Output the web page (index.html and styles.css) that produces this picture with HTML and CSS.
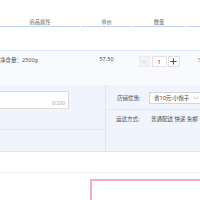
FILE: index.html
```html
<!DOCTYPE html>
<html lang="zh">
<head>
<meta charset="utf-8">
<link rel="stylesheet" href="styles.css">
</head>
<body>
<div class="page">
  <div class="grid thead">
    <div class="th">商品属性</div>
    <div class="th">单价</div>
    <div class="th">数量</div>
    <div class="th"></div>
  </div>
  <div class="spacer-top"></div>
  <div class="grid item">
    <div class="attr">净含量：2500g</div>
    <div class="price">57.50</div>
    <div class="qty">
      <span class="qbtn minus"><svg viewBox="0 0 10 10" width="6" height="6"><line x1="1" y1="5" x2="9" y2="5" stroke="#c8c8c8" stroke-width="1.2"/></svg></span>
      <span class="qinput">1</span>
      <span class="qbtn plus"><svg viewBox="0 0 10 10" width="7" height="7"><line x1="0.5" y1="5" x2="9.5" y2="5" stroke="#444" stroke-width="1.3"/><line x1="5" y1="0.5" x2="5" y2="9.5" stroke="#444" stroke-width="1.3"/></svg></span>
    </div>
    <div class="sum">57.50</div>
  </div>
  <div class="extra">
    <div class="left">
      <div class="msgrow">
        <div class="msgbox"><span class="count">0/200</span></div>
      </div>
      <div class="row2"></div>
    </div>
    <div class="right">
      <div class="shoprow">
        <span class="label">店铺优惠:</span>
        <div class="select">
          <span>省10元:小饱子</span>
          <svg class="chev" viewBox="0 0 10 6" width="6" height="4"><polyline points="0.5,0.5 5,5 9.5,0.5" fill="none" stroke="#999" stroke-width="1"/></svg>
        </div>
      </div>
      <div class="shiprow">
        <span class="label">运送方式:</span>
        <span class="ship">普通配送 快递 免邮</span>
      </div>
    </div>
  </div>
  <div class="spacer-mid"></div>
  <div class="bottom">
    <div class="pinkbox"></div>
  </div>
</div>
</body>
</html>
```

FILE: styles.css
```css
html, body {
  margin: 0;
  padding: 0;
  background: #ffffff;
}
html {
  height: 200px;
  overflow: hidden;
}
body {
  width: 200px;
  height: 200px;
  overflow: hidden;
  font-family: "Noto Sans", "Noto Sans CJK SC", sans-serif;
  color: #333333;
}
.page {
  width: 200px;
  height: 200px;
  overflow: hidden;
}
.grid {
  display: grid;
  grid-template-columns: 80px 51px 52px 1fr;
  column-gap: 1px;
}
.thead {
  height: 27px;
}
.th {
  height: 26px;
  border-bottom: 1px solid #bdd3f0;
  display: flex;
  align-items: flex-end;
  justify-content: center;
  font-size: 5.3px;
  line-height: 8px;
  color: #666666;
  white-space: nowrap;
}
.spacer-top {
  height: 23px;
}
.item {
  border-top: 1px solid #dbe7f8;
  background: #f8fafe;
  height: 29px;
  padding-top: 5px;
  align-items: start;
  font-size: 5.5px;
  white-space: nowrap;
}
.attr {
  line-height: 8px;
  color: #555555;
}
.price {
  line-height: 7px;
  text-align: center;
  color: #444444;
}
.qty {
  display: flex;
  justify-content: center;
  align-items: center;
  height: 11px;
}
.qbtn, .qinput {
  box-sizing: border-box;
  height: 11px;
  display: flex;
  align-items: center;
  justify-content: center;
  border: 1px solid #e2e2e2;
}
.minus {
  width: 11px;
  background: #f3f3f3;
  border-color: #ececec;
  margin-right: 2px;
}
.qinput {
  width: 15px;
  background: #ffffff;
  font-size: 5.5px;
  color: #333333;
  margin-right: 1px;
}
.plus {
  width: 12px;
  background: #ffffff;
}
.sum {
  padding-left: 12px;
  line-height: 8px;
  color: #999999;
  overflow: hidden;
}
.extra {
  display: flex;
  background: #eff4fd;
  height: 66px;
  border-bottom: 1px solid #d9e5f6;
}
.left {
  width: 105px;
  border-right: 1px solid #dde7f6;
  display: flex;
  flex-direction: column;
}
.msgrow {
  border-bottom: 1px solid #e1e9f6;
  padding-top: 6px;
  box-sizing: content-box;
  height: 38px;
}
.msgbox {
  box-sizing: border-box;
  width: 69px;
  height: 18px;
  background: #ffffff;
  border: 1px solid #dcdcdc;
  border-left: none;
  display: flex;
  align-items: flex-end;
  justify-content: flex-end;
  padding: 0 3px 1px 0;
}
.count {
  font-size: 5px;
  line-height: 7px;
  color: #aaaaaa;
}
.row2 {
  flex: 1;
}
.right {
  flex: 1;
  display: flex;
  flex-direction: column;
  font-size: 5.5px;
  white-space: nowrap;
}
.shoprow {
  height: 25px;
  border-bottom: 1px solid #e1e9f6;
  display: flex;
  align-items: center;
  padding-left: 11px;
  padding-top: 1px;
  box-sizing: border-box;
}
.label {
  width: 32px;
  flex: none;
  color: #555555;
  line-height: 8px;
}
.select {
  box-sizing: border-box;
  height: 12px;
  flex: 1;
  margin-right: -6px;
  background: #ffffff;
  border: 1px solid #d6d6d6;
  display: flex;
  align-items: center;
  padding-left: 4px;
  gap: 4px;
  color: #333333;
}
.chev {
  flex: none;
}
.shiprow {
  display: flex;
  padding-left: 10px;
  padding-top: 5px;
  line-height: 8px;
}
.shiprow .label {
  width: 35px;
}
.ship {
  color: #444444;
}
.spacer-mid {
  height: 20px;
  border-bottom: 1px solid #eeeeee;
}
.bottom {
  padding: 6px 0 0 90px;
}
.pinkbox {
  height: 19px;
  margin-right: -10px;
  border: 2px solid #f5aebb;
  border-right: none;
  border-bottom: none;
}
```
